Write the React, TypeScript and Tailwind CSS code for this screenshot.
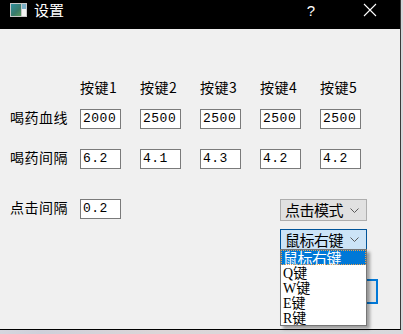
import React from "react";

const cjk = { fontFamily: '"Noto Sans CJK SC", "Noto Sans", sans-serif' };
const mono = { fontFamily: '"Liberation Mono", "Noto Sans CJK SC", monospace' };

function Field({ v }: { v: string }) {
  return (
    <div className="w-[60px] shrink-0">
      <div
        className="w-[41px] h-[20px] border border-[#7a7a7a] bg-white text-[13px] leading-[18px] pl-[2px] text-black"
        style={mono}
      >
        {v}
      </div>
    </div>
  );
}

function Chevron() {
  return (
    <svg width="9" height="5" viewBox="0 0 9 5" className="shrink-0">
      <path d="M0.5 0.5 L4.5 4.5 L8.5 0.5" fill="none" stroke="#5a5a5a" strokeWidth="1" />
    </svg>
  );
}

export default function App() {
  const labels = ["按键1", "按键2", "按键3", "按键4", "按键5"];
  return (
    <div className="relative w-[403px] h-[334px] overflow-hidden bg-[linear-gradient(90deg,#d6d6de_0%,#cfd0da_10%,#dcd6d8_40%,#d8d8dc_100%)]" style={cjk}>
      <div className="w-[401px] h-[330px] flex flex-col border-r border-b border-r-[#3a3a3a] border-b-black bg-[#f0f0f0]">
        {/* title bar */}
        <div className="h-[29px] bg-black flex items-start shrink-0 relative">
          <div className="ml-[10px] mt-[3px] w-[17px] h-[14px] bg-[#c8c8c8] p-[1px] flex">
            <div className="flex-1 bg-[linear-gradient(135deg,#2f8f9f,#3a7a6a_60%,#5a9a5a)]" />
            <div className="w-[4px] bg-[#f4f4f4] ml-[1px] flex flex-col">
              <div className="h-[5px] bg-[#7ab0c8]" />
            </div>
          </div>
          <div className="ml-[7px] text-white text-[15px] leading-[20px] tracking-[0px]">设置</div>
          <div className="ml-auto mr-[48px] text-white text-[15px] leading-[20px] mt-[1px]" style={{ fontFamily: '"Liberation Sans", sans-serif' }}>?</div>
          <svg width="14" height="14" viewBox="0 0 14 14" className="mt-[3px] mr-[23px]">
            <path d="M1 1 L13 13 M13 1 L1 13" stroke="#ffffff" strokeWidth="1.1" />
          </svg>
        </div>

        {/* body */}
        <div className="flex-1 pl-[10px] pt-[49px] text-black text-[14px] tracking-[0.5px]">
          <div className="flex pl-[70px] h-[20px] leading-[18px]">
            {labels.map((l) => (
              <div key={l} className="w-[60px] shrink-0">{l}</div>
            ))}
          </div>

          <div className="flex items-start mt-[11px]">
            <div className="w-[70px] shrink-0 leading-[17px]">喝药血线</div>
            {["2000", "2500", "2500", "2500", "2500"].map((v, i) => (
              <Field key={i} v={v} />
            ))}
          </div>

          <div className="flex items-start mt-[20px]">
            <div className="w-[70px] shrink-0 leading-[17px]">喝药间隔</div>
            {["6.2", "4.1", "4.3", "4.2", "4.2"].map((v, i) => (
              <Field key={i} v={v} />
            ))}
          </div>

          <div className="flex items-start mt-[30px]">
            <div className="w-[270px] shrink-0 flex items-start">
              <div className="w-[70px] shrink-0 leading-[17px]">点击间隔</div>
              <Field v="0.2" />
            </div>
            <div className="w-[87px] shrink-0 flex flex-col relative">
              <div className="h-[22px] border border-[#adadad] bg-[#e1e1e1] flex items-center pl-[4px] pr-[7px] text-[15px] tracking-[-0.5px]">
                <span className="flex-1 leading-[20px]">点击模式</span>
                <Chevron />
              </div>
              <div className="mt-[8px] h-[21px] border border-[#005499] bg-[#cce4f7] flex items-center pl-[4px] pr-[7px] text-[15px] tracking-[-0.5px]">
                <span className="flex-1 leading-[19px]">鼠标右键</span>
                <Chevron />
              </div>
              <div className="mt-[29px] ml-[23px] w-[75px] h-[25px] border-2 border-[#0078d7] bg-[#e1e1e1]" />

              {/* dropdown list */}
              <div className="absolute left-0 top-[50px] w-[87px] h-[77px] border border-[#767676] bg-white shadow-[3px_3px_3px_rgba(0,0,0,0.35)] text-[14px] tracking-[0px] flex flex-col">
                <div className="h-[15px] bg-[#0078d7] text-white text-[15px] tracking-[-0.5px] leading-[15px] pl-[2px] outline outline-1 outline-dotted outline-[#e8a050] -outline-offset-1">鼠标右键</div>
                {["Q键", "W键", "E键", "R键"].map((t) => (
                  <div key={t} className="h-[15px] leading-[15px] pl-[2px]">
                    <span style={{ fontFamily: '"Liberation Serif", serif' }}>{t[0]}</span>
                    <span>{t.slice(1)}</span>
                  </div>
                ))}
              </div>
            </div>
          </div>
        </div>
      </div>
    </div>
  );
}
